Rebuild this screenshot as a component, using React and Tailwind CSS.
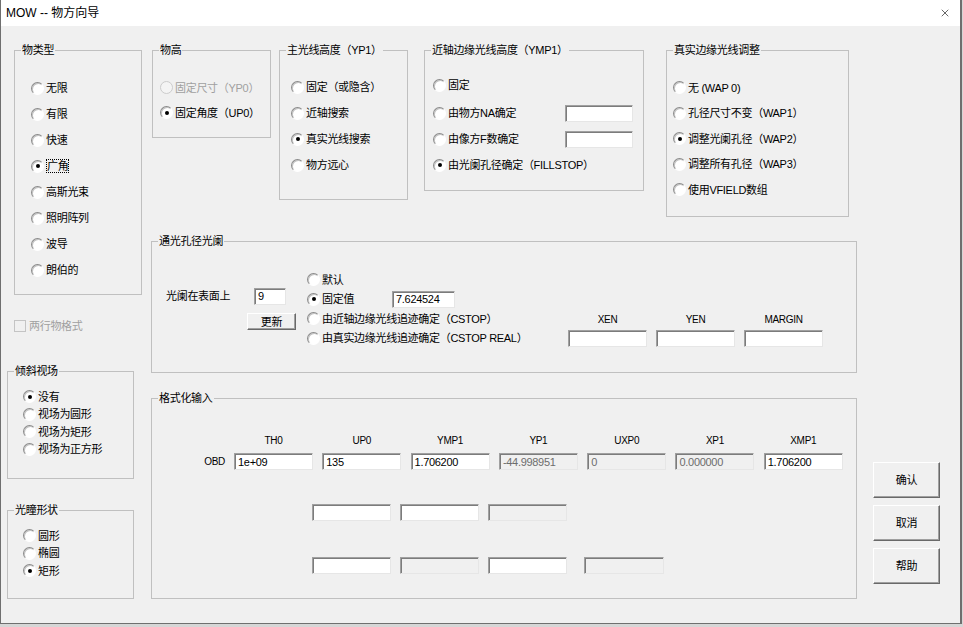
import { X } from 'lucide-react';

function Group({ title, className = '', children }) {
  return (
    <div className={`relative border border-[#c0c0c0] shrink-0 ${className}`}>
      <span className="absolute -top-[8px] left-[6px] px-[1px] bg-[#f0f0f0] leading-[14px] whitespace-nowrap">
        {title}
      </span>
      {children}
    </div>
  );
}

function Radio({ checked, disabled, focus, className = '', children }) {
  const ring = disabled
    ? 'border-[#cccccc] bg-[#f4f4f4]'
    : 'border-t-[#8a8a8a] border-l-[#8a8a8a] border-r-white border-b-white bg-white shadow-[inset_1px_1px_0_#c4c4c4]';
  return (
    <div className={`flex items-center whitespace-nowrap ${className}`}>
      <span className={`w-[13px] h-[13px] rounded-full border flex items-center justify-center shrink-0 ${ring}`}>
        {checked && <span className="w-[4px] h-[4px] rounded-full bg-black" />}
      </span>
      <span
        className={`ml-[2px] ${disabled ? 'text-[#a0a0a0]' : ''} ${focus ? 'border border-dotted border-black leading-[12px]' : ''}`}
      >
        {children}
      </span>
    </div>
  );
}

function Field({ value = '', disabled, className = '' }) {
  return (
    <div
      className={`h-[17px] border border-t-[#a0a0a0] border-l-[#a0a0a0] border-r-[#e6e6e6] border-b-[#e6e6e6] shadow-[inset_1px_1px_0_#7c7c7c] pl-[3px] flex items-center text-[11px] whitespace-nowrap overflow-hidden shrink-0 ${
        disabled ? 'bg-[#f0f0f0] text-[#6d6d6d]' : 'bg-white'
      } ${className}`}
    >
      {value}
    </div>
  );
}

function Button({ children, className = '' }) {
  return (
    <button
      className={`bg-[#f0f0f0] border border-t-white border-l-white border-r-[#696969] border-b-[#696969] shadow-[inset_-1px_-1px_0_#a0a0a0] flex items-center justify-center ${className}`}
    >
      {children}
    </button>
  );
}

const columns = [
  { name: 'TH0', value: '1e+09' },
  { name: 'UP0', value: '135' },
  { name: 'YMP1', value: '1.706200' },
  { name: 'YP1', value: '-44.998951', disabled: true },
  { name: 'UXP0', value: '0', disabled: true },
  { name: 'XP1', value: '0.000000', disabled: true },
  { name: 'XMP1', value: '1.706200' },
];

export default function App() {
  return (
    <div className="w-[963px] h-[627px] bg-[#d6d6d6] overflow-hidden font-['Liberation_Sans','Noto_Sans_CJK_SC',sans-serif] text-[11px] leading-[14px] tracking-[-0.3px] text-black">
      <div className="w-[962px] h-[624px] bg-[#f0f0f0] border-l border-r-2 border-b border-[#6f6f6f] flex flex-col">
        {/* title bar */}
        <div className="h-[26px] bg-white flex items-center justify-between pl-[5px] pr-[9px] shrink-0">
          <span className="text-[12px] tracking-normal">MOW -- 物方向导</span>
          <X size={12} strokeWidth={1.2} className="text-black" />
        </div>

        <div className="flex pl-[6px]">
          {/* left column */}
          <div className="w-[135px] flex flex-col shrink-0">
            <Group title="物类型" className="ml-[7px] mt-[24px] w-[128px] h-[245px] pt-[24px] pl-[16px]">
              <Radio className="h-[26px]">无限</Radio>
              <Radio className="h-[26px]">有限</Radio>
              <Radio className="h-[26px]">快速</Radio>
              <Radio className="h-[26px]" checked focus>广角</Radio>
              <Radio className="h-[26px]">高斯光束</Radio>
              <Radio className="h-[26px]">照明阵列</Radio>
              <Radio className="h-[26px]">波导</Radio>
              <Radio className="h-[26px]">朗伯的</Radio>
            </Group>

            <div className="ml-[7px] mt-[23px] h-[16px] flex items-center">
              <span className="w-[12px] h-[12px] border border-[#c4c4c4] bg-[#f0f0f0]" />
              <span className="ml-[3px] text-[#a0a0a0]">两行物格式</span>
            </div>

            <Group title="倾斜视场" className="mt-[37px] w-[127px] h-[108px] pt-[16px] pl-[15px]">
              <Radio className="h-[17.5px]" checked>没有</Radio>
              <Radio className="h-[17.5px]">视场为圆形</Radio>
              <Radio className="h-[17.5px]">视场为矩形</Radio>
              <Radio className="h-[17.5px]">视场为正方形</Radio>
            </Group>

            <Group title="光瞳形状" className="mt-[31px] w-[127px] h-[89px] pt-[16px] pl-[15px]">
              <Radio className="h-[17.5px]">圆形</Radio>
              <Radio className="h-[17.5px]">椭圆</Radio>
              <Radio className="h-[17.5px]" checked>矩形</Radio>
            </Group>
          </div>

          {/* right area */}
          <div className="ml-[9px] flex flex-col">
            <div className="mt-[24px] flex items-start">
              <Group title="物高" className="ml-[1px] w-[119px] h-[88px] pt-[24px] pl-[7px]">
                <Radio className="h-[25px]" disabled>固定尺寸（YP0）</Radio>
                <Radio className="h-[25px]" checked>固定角度（UP0）</Radio>
              </Group>

              <Group title="主光线高度（YP1）" className="ml-[8px] w-[129px] h-[150px] pt-[23px] pl-[11px]">
                <Radio className="h-[26px]">固定（或隐含）</Radio>
                <Radio className="h-[26px]">近轴搜索</Radio>
                <Radio className="h-[26px]" checked>真实光线搜索</Radio>
                <Radio className="h-[26px]">物方远心</Radio>
              </Group>

              <Group title="近轴边缘光线高度（YMP1）" className="ml-[16px] w-[220px] h-[141px] pt-[21px] pl-[8px] pr-[10px]">
                <Radio className="h-[26px]">固定</Radio>
                <div className="h-[26px] mt-[2px] flex items-center justify-between">
                  <Radio>由物方NA确定</Radio>
                  <Field className="w-[68px]" />
                </div>
                <div className="h-[26px] flex items-center justify-between">
                  <Radio>由像方F数确定</Radio>
                  <Field className="w-[68px]" />
                </div>
                <Radio className="h-[26px]" checked>由光阑孔径确定（FILLSTOP）</Radio>
              </Group>

              <Group title="真实边缘光线调整" className="ml-[22px] w-[183px] h-[167px] pt-[24px] pl-[6px]">
                <Radio className="h-[25.5px]">无 (WAP 0)</Radio>
                <Radio className="h-[25.5px]">孔径尺寸不变（WAP1）</Radio>
                <Radio className="h-[25.5px]" checked>调整光阑孔径（WAP2）</Radio>
                <Radio className="h-[25.5px]">调整所有孔径（WAP3）</Radio>
                <Radio className="h-[25.5px]">使用VFIELD数组</Radio>
              </Group>
            </div>

            <Group title="通光孔径光阑" className="mt-[24px] w-[706px] h-[132px] pt-[28px] pl-[14px] pr-[33px] flex items-start">
              <div className="w-[130px] mt-[18px] flex flex-col shrink-0">
                <div className="h-[16px] flex items-center">
                  <span className="w-[88px]">光阑在表面上</span>
                  <Field className="w-[32px] h-[16px]" value="9" />
                </div>
                <Button className="ml-[81px] mt-[9px] w-[49px] h-[17px]">更新</Button>
              </div>

              <div className="ml-[11px] flex flex-col">
                <Radio className="h-[19.5px]">默认</Radio>
                <div className="h-[19.5px] flex items-center">
                  <Radio checked>
                    <span className="inline-block w-[70px]">固定值</span>
                  </Radio>
                  <Field className="w-[63px] h-[16px]" value="7.624524" />
                </div>
                <Radio className="h-[19.5px]">由近轴边缘光线追迹确定（CSTOP）</Radio>
                <Radio className="h-[19.5px]">由真实边缘光线追迹确定（CSTOP REAL）</Radio>
              </div>

              <div className="ml-auto mt-[43px] flex gap-[9px]">
                {['XEN', 'YEN', 'MARGIN'].map((n) => (
                  <div key={n} className="w-[79px] flex flex-col items-center">
                    <span className="h-[14px] text-[10px]">{n}</span>
                    <Field className="mt-[3px] w-[79px]" />
                  </div>
                ))}
              </div>
            </Group>

            <div className="mt-[25px] flex items-start">
              <Group title="格式化输入" className="w-[706px] h-[201px] pt-[35px]">
                <div className="ml-[82px] flex gap-[9.3px]">
                  {columns.map((c) => (
                    <span key={c.name} className="w-[79px] h-[14px] text-center text-[10px]">
                      {c.name}
                    </span>
                  ))}
                </div>
                <div className="mt-[5px] flex items-center">
                  <span className="w-[82px] pr-[9px] text-right text-[10px]">OBD</span>
                  <div className="flex gap-[9.3px]">
                    {columns.map((c) => (
                      <Field key={c.name} className="w-[79px]" value={c.value} disabled={c.disabled} />
                    ))}
                  </div>
                </div>
                <div className="mt-[34px] ml-[160px] flex gap-[9px]">
                  <Field className="w-[79px]" />
                  <Field className="w-[79px]" />
                  <Field className="w-[79px]" disabled />
                </div>
                <div className="mt-[36px] ml-[160px] flex">
                  <Field className="w-[79px]" />
                  <Field className="w-[79px] ml-[9px]" disabled />
                  <Field className="w-[79px] ml-[9px]" />
                  <Field className="w-[80px] ml-[17px]" disabled />
                </div>
              </Group>

              <div className="ml-[16px] mt-[64px] flex flex-col gap-[7px]">
                <Button className="w-[67px] h-[36px]">确认</Button>
                <Button className="w-[67px] h-[36px]">取消</Button>
                <Button className="w-[67px] h-[36px]">帮助</Button>
              </div>
            </div>
          </div>
        </div>
      </div>
    </div>
  );
}
